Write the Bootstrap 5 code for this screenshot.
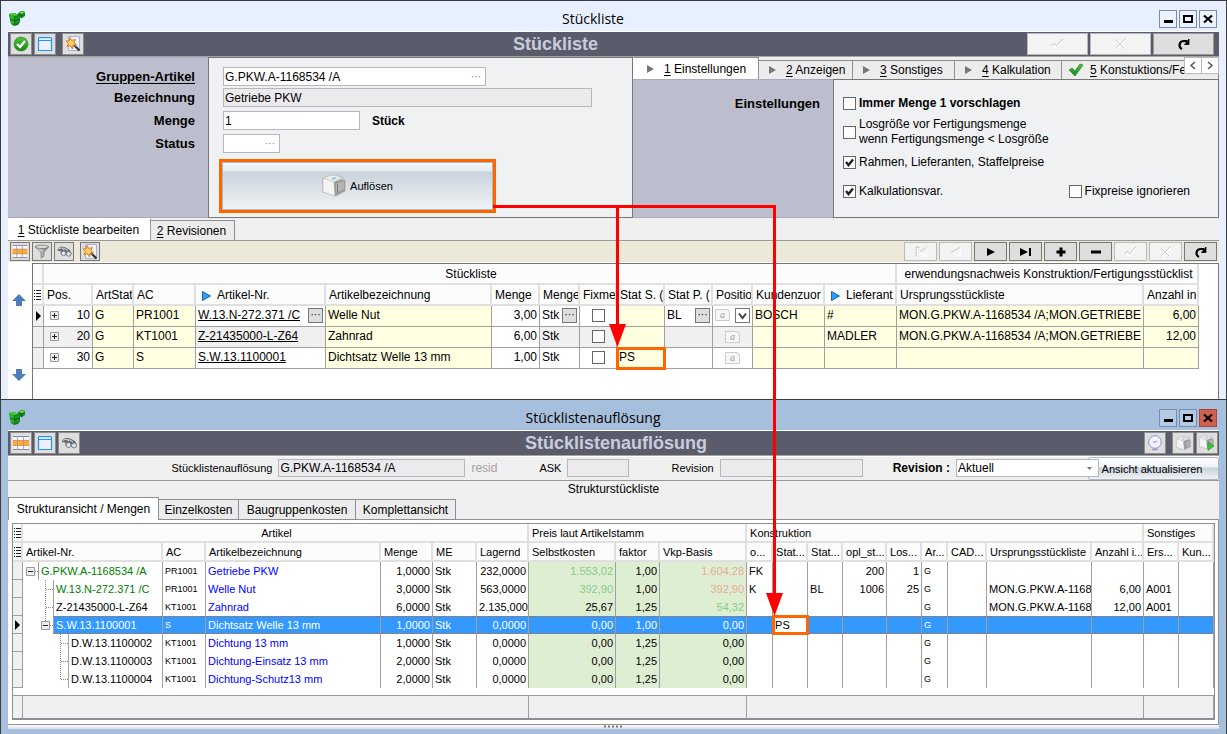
<!DOCTYPE html>
<html lang="de">
<head>
<meta charset="utf-8">
<meta name="viewport" content="width=device-width, initial-scale=1">
<title>Stückliste</title>
<link href="https://cdn.jsdelivr.net/npm/bootstrap@5.3.0/dist/css/bootstrap.min.css" rel="stylesheet">
<style>
:root{--ui:"Liberation Sans",Arial,sans-serif;--line:#8c8f94;--bar:#5a5c6c;--lilac:#bdbecd;--pane:#eff1f3;--mark:#ff6600}
body{font:12px/16px var(--ui);color:#000;background:#a6bfdc;min-height:100vh}
button,input,select{font:inherit;color:inherit}
svg{display:block;flex:none}
a{color:#000}
u{text-underline-offset:2px}
.win{border:1px solid #3c3c40;border-bottom:0;padding:0 7px}
.win-list{background:#e8efff}
.win-tree{background:#a6bfdc;flex:1}
.win-title{height:30px;padding:0 2px 0 1px}
.win-title>svg{margin-top:9px}
.win-title h1{font:14px/20px "Open Sans","Noto Sans",sans-serif;padding:8px 0 0 2px;margin:0}
.win-btns{gap:2px;padding-top:9px}
.win-btn{width:18px;height:18px;border:1px solid #7d8bab;background:#edf2ff;padding:0}
.win-tree .win-btn{background:#b3cae5}
.win-tree .win-btn.closer{background:#d0604f;border-color:#a8483a}
.bar-dark{background:var(--bar);border-top:1px solid #fff;border-bottom:1px solid #a5a59e;height:26px;padding:0 5px 0 2px;gap:2px}
.win-tree .bar-dark{padding-right:1px}
.bar-dark h2{font:bold 18px/22px var(--ui);color:#c9ccda;margin:0}
.apart{margin-left:4px}
.tool{width:22px;height:22px;background:#dedede;border:1px solid #8d8d8d;padding:0}
.tool-sm{width:20px;height:19px;background:#dedede;border:1px solid #777;padding:0}
.tool-wide{width:61px;height:22px;background:#dedede;border:1px solid #999;padding:0}
.tool-nav{width:33px;height:19px;background:#dedede;border:1px solid #777;padding:0}
.tool-wide:disabled,.tool-nav:disabled{background:#f3f3f3;border-color:#b9bac0}
.labels{background:var(--lilac);font:bold 13px/19px var(--ui);text-align:right;width:200px;flex:none;padding:9px 13px 0 0;border-top:1px solid #a9aabb;border-bottom:1px solid #a9aabb}
.fields{background:var(--pane);border:1px solid #777;padding:9px 0 0 14px;flex:1 1 425px;height:161px}
.row-gap-s{margin-bottom:2px}.row-gap-m{margin-bottom:4px}
.inp{height:19px;border:1px solid #b4b7bd;background:#fff;padding:0 1px;border-radius:0;min-width:0;line-height:17px}
.inp.locked{background:#ebebed}
.inp-dots{background:#fff;height:19px;border:1px solid #b4b7bd}
.inp-dots input{border:0;height:17px;padding:0 1px;flex:1;min-width:0;background:none}
.inp-dots button{border:0;background:none;padding:0;width:18px;line-height:10px;color:#777;font-size:10px}
.w-art{width:263px}.w-bez{width:369px}.w-menge{width:137px}.w-status{width:57px}
.resolve{width:271px;height:48px;margin:9px 0 0 -1px;border:1px solid #a9b9c8;outline:3px solid var(--mark);background:linear-gradient(#f6f9fc 0,#e2e9f0 8px,#c9d3dc 9px,#f0f2f4 100%);font-size:11px}
.side{flex:1 1 586px;min-width:0}
.tabs-top{height:22px;background:#f0f0f0;overflow:hidden}
.tab-b{border:1px solid var(--line);border-bottom:0;background:#ececec;padding:0;white-space:nowrap;text-align:center;margin-right:-1px;flex:none}
.tab-b.on{background:#fff;z-index:1}
.tabs-top .tab-b{height:19px;align-self:flex-end;padding:0 0 0 10px;display:flex;align-items:center;gap:10px}
.tabs-top .tab-b.on{height:22px;padding:0 0 0 13px;border-left-color:#fff;width:126px}
.w-t2{width:95px}.w-t3{width:103px}.w-t4{width:108px}
.tabs-top .tab-b.w-t5{width:158px;padding-left:6px;gap:6px}
.scroller{top:0;right:0;z-index:2}
.scroller button{width:18px;height:17px;border:1px solid #b8b8b8;background:#fff;padding:0;margin-left:-1px}
.side .labels{padding-top:14px}
.checks{background:var(--pane);border:1px solid #777;flex:1 1 386px;height:139px;padding:16px 28px 0 9px}
.checks label{display:flex;align-items:center;gap:3px;line-height:15px;white-space:nowrap}
.checks>*{margin-bottom:8px}
.checks>:first-child{margin-bottom:6px}
.checks>:nth-child(3){margin-bottom:14px}
.cb{appearance:none;width:13px;height:13px;border:1px solid #666;background:#fff;margin:0;flex:none}
.cb:checked{background:#fff url("data:image/svg+xml,%3Csvg xmlns='http://www.w3.org/2000/svg' viewBox='0 0 11 11'%3E%3Cpath d='M2 5l2.5 3L9 2.5' fill='none' stroke='%23222' stroke-width='2.4'/%3E%3C/svg%3E")}
.tabs-mid{height:23px;background:#f0f0f0;border-bottom:1px solid #999}
.tabs-mid .tab-b{height:20px;align-self:flex-end;width:85px;padding-right:2px}
.tabs-mid .tab-b.on{height:22px;width:143px;padding-right:2px;border-color:#fff #999 #fff #fff}
.bar-sand{background:#ece9d8;height:22px;padding:1px 2px 0 2px;border-bottom:1px solid #fff}
.gap-2px{gap:2px}
.mover{width:24px;flex:none;background:#fff;padding:31px 0 0 3px;gap:63px}
.mover button{border:0;background:none;padding:0;display:block}
.grid-a{border:1px solid #777;border-bottom:0;background:#fff;padding:0 19px 30px 0;flex:1;min-width:0}
.sheet{table-layout:fixed;width:100%;border-collapse:separate;border-spacing:0}
.sheet th,.sheet td{padding:0 2px;overflow:hidden;white-space:nowrap;font-weight:400;text-align:left;vertical-align:middle}
.sheet th{background:#fcfcfc;border-right:2px solid #e0e0e0;border-bottom:2px solid #e0e0e0;padding:2px 0 0 3px}
.sheet .num{text-align:right}
.sheet .ctr{text-align:center}
.sheet td.hit{outline:3px solid var(--mark);outline-offset:-2px}
.bom th,.bom td{height:21px;line-height:17px}
.bom td{border-right:1px solid #a0a0a0;border-bottom:1px solid #a0a0a0;line-height:18px;padding-bottom:2px}
.bom .y{background:#ffffe1}
.bom .alt td:not(.y):not(.w){background:#f0f0f0}
.bom .flagged{display:flex;align-items:center;gap:6px;padding-left:3px}
.bom td.ind,.tree td.ind{background:#f0f0f0;padding:0}
.sheet th.ind{padding:0}
.bom col:nth-child(1){width:11px}.bom col:nth-child(2){width:49px}.bom col:nth-child(3){width:41px}.bom col:nth-child(4){width:62px}
.bom col:nth-child(5){width:130px}.bom col:nth-child(6){width:166px}.bom col:nth-child(7),.bom col:nth-child(10),.bom col:nth-child(11){width:48px}
.bom col:nth-child(8),.bom col:nth-child(12){width:40px}.bom col:nth-child(9){width:37px}
.bom col:nth-child(13),.bom col:nth-child(14){width:72px}.bom col:nth-child(16){width:55px}
.dots{width:15px;height:15px;border:1px solid #777;background:#dedede;padding:0;line-height:8px;font-size:10px;flex:none}
.cell{display:flex;align-items:center;justify-content:space-between}
.note{width:15px;height:12px;border:1px solid #ccc;background:#f7f7f7;color:#999;font:italic 10px/9px "Liberation Serif",serif;text-align:center;border-top-right-radius:4px;display:inline-block;flex:none}
.bar-form{background:#f0f0f0;height:25px;border-bottom:1px solid #999;border-top:1px solid #fff;font-size:11px;padding-top:2px}
.bar-form .inp{height:18px;font-size:12px;line-height:16px}
.near{margin-right:6px}.far{margin-right:42px}.mid{margin-right:30px}
.w-obj{width:187px}.w-ask{width:62px}.w-rev{width:143px}
.muted{color:#a0a0a0;font-size:12px}
.revlabel{font-weight:700;font-size:12px}
.revsel{appearance:none;position:relative;width:143px;background:#fff url("data:image/svg+xml,%3Csvg xmlns='http://www.w3.org/2000/svg' width='5' height='3'%3E%3Cpath d='M0 0h5L2.5 3z' fill='%23777'/%3E%3C/svg%3E") no-repeat right 6px center}
.refresh{width:131px;height:23px;margin:-2px 0 0 -11px;border:1px solid #a9b9c8;border-radius:2px;background:linear-gradient(#fff 0,#eef2f6 9px,#c9d3dc 10px,#f0f2f4 100%);padding:0 3px 0 0;white-space:nowrap}
.sub{background:#f0f0f0;line-height:16px;height:16px;text-align:center}
.tabs-low{background:#f0f0f0;height:23px;border-bottom:1px solid var(--line)}
.tabs-low .tab-b{height:20px;align-self:flex-end}
.tabs-low .tab-b.on{height:23px;margin-bottom:-1px;line-height:18px;width:151px}
.w-l2{width:81px}.w-l3{width:118px}.w-l4{width:101px}
.low-body{background:#fff;padding:3px 3px 4px 4px;border-bottom:1px solid var(--line);border-right:1px solid var(--line)}
.grid-b{border:1px solid var(--line);border-bottom-width:2px}
.tree{font-size:11px}
.tree th{height:19px;line-height:15px}
.tree td{height:18px;line-height:18px;border-right:1px solid #a0a0a0}
.tree td.ind{border-bottom:1px solid #a0a0a0}
.tree .tiny{font-size:9px}
.tree .name{color:#00f}
.tree td.gr{background:#deeed2}
.tree .pos{color:#8c8}.tree .neg{color:#eba99c}
.tree .limb{padding:0}
.tree .limb>div{display:flex;height:18px}
.tree .limb span{border-left:1px solid #a0a0a0;padding-left:2px;flex:1;overflow:hidden}
.tree .sel td:not(.ind):not(.hit):not(.limb),.tree .sel .limb span{background:#3399ff;color:#fff;border-top:1px dotted #c96a1c;border-bottom:1px dotted #c96a1c;line-height:16px}
.tree .art{color:#008000}
.tree td.gap-row{height:7px;line-height:0;border:0}
.tree tfoot td{height:23px;background:#f0f0f0;border-top:1px solid #999}
.tree col:nth-child(1){width:10px}.tree col:nth-child(2){width:140px}.tree col:nth-child(3){width:43px}.tree col:nth-child(4){width:175px}
.tree col:nth-child(5),.tree col:nth-child(7),.tree col:nth-child(19){width:52px}
.tree col:nth-child(6),.tree col:nth-child(9),.tree col:nth-child(14){width:44px}
.tree col:nth-child(8),.tree col:nth-child(10){width:87px}
.tree col:nth-child(11),.tree col:nth-child(16){width:26px}
.tree col:nth-child(12),.tree col:nth-child(13),.tree col:nth-child(15),.tree col:nth-child(20),.tree col:nth-child(21){width:35px}
.tree col:nth-child(17){width:39px}
.grip{height:4px;background:linear-gradient(#fff,#d5dae2)}
.flow{top:0;left:0;pointer-events:none;z-index:5}
</style>
</head>
<body class="position-relative d-flex flex-column">

<svg width="0" height="0" class="position-absolute" aria-hidden="true">
 <defs>
  <linearGradient id="gGreen" x1="0" y1="0" x2="0" y2="1"><stop offset="0" stop-color="#4fc33c"/><stop offset="1" stop-color="#14861a"/></linearGradient>
  <linearGradient id="gMetal" x1="0" y1="0" x2="1" y2="0"><stop offset="0" stop-color="#fafafa"/><stop offset="1" stop-color="#777"/></linearGradient>
 </defs>
 <symbol id="i-logo" viewBox="0 0 16 16"><path d="M0 4l5-1 6 2v7l-2 3-4 1-3-2z" fill="#0f7a18"/><path d="M0 4l5-1 5 2-5 1z" fill="#4fd23c"/><path d="M0 4l5 2v9l-3-2z" fill="#2fb52b"/><path d="M6 7l4-1v6l-4 2z" fill="#1a9a22"/><path d="M9 3l3-2h3l1 2v3l-3 2-3-1z" fill="#14861a"/><path d="M9.500 3l3-1.500h2.500l.5 1-3 1.500z" fill="#66e04e"/><path d="M1 9l5 2 4-2M9.500 4l3 1v3" fill="none" stroke="#0a5510" stroke-width=".9"/></symbol>
 <symbol id="i-ok" viewBox="0 0 16 16"><circle cx="8" cy="8" r="7" fill="url(#gGreen)" stroke="#157a18" stroke-width=".6"/><path d="M4 8l3 3 5-6" fill="none" stroke="#fff" stroke-width="2.300"/></symbol>
 <symbol id="i-win" viewBox="0 0 16 16"><path d="M1.500 2.500q0-1 1-1h11q1 0 1 1v12h-13z" fill="#eef0ff" stroke="#1e96f5" stroke-width="1.200"/><path d="M1.500 4.500h13" stroke="#1e96f5"/><path d="M2 2.500h12" stroke="#bfe1ff"/></symbol>
 <symbol id="i-wand" viewBox="0 0 16 16"><path d="M3.500.5h11v14h-11z" fill="#edf0fa" stroke="#a5b1d6"/><path d="M5 1.500l1.700 3 3.500-1-1.200 3.300 2.500 2.200-3.500.5L7.500 13 5.500 9.500 2 10.500l1.500-3L1 5l3.300-.3z" fill="#ffd068" stroke="#e07a10"/><path d="M9 9l5.500 5.500" stroke="#333" stroke-width="2.200"/><path d="M9 8.500l2 2" stroke="#ccc"/></symbol>
 <symbol id="i-grid" viewBox="0 0 16 16"><path d="M0 1h16v14H0z" fill="#f3f3ff"/><path d="M0 5.500h16v5H0z" fill="#ffa837"/><path d="M0 1.500h16M0 14.500h16" stroke="#889"/><path d="M4.500 1v14M10.500 1v14" stroke="#9a9ab5" stroke-width=".8"/><path d="M0 5.500h16M0 10.500h16" stroke="#c77c1f" stroke-width=".6"/></symbol>
 <symbol id="i-funnel" viewBox="0 0 16 16"><path d="M1 3l6 6v6l3-2V9l5-6z" fill="url(#gMetal)" stroke="#666" stroke-width=".7"/><ellipse cx="8" cy="3" rx="7" ry="1.800" fill="#ddd" stroke="#666" stroke-width=".8"/></symbol>
 <symbol id="i-bino" viewBox="0 0 16 16"><path d="M1 5.500l3-2.500h4l6 3 2 4-2 3-3-1-1-3-3 2-3-1 1-2-4-1z" fill="#6a6a6a"/><path d="M2 5.500l3-1.500 3 2M7 4l5 3" stroke="#e4e4e4" fill="none"/><circle cx="7.500" cy="10" r="2.500" fill="#d5e6f6" stroke="#666" stroke-width=".8"/><circle cx="13" cy="10.500" r="2.500" fill="#d5e6f6" stroke="#666" stroke-width=".8"/></symbol>
 <symbol id="i-box" viewBox="0 0 24 24"><path d="M1 4l9-3 10 2 3 3v11l-9 5L1 18z" fill="#ddd" stroke="#aaa" stroke-width=".8"/><path d="M1 4l11 4 1 14L1 18z" fill="#f4f4f4" stroke="#bbb" stroke-width=".6"/><path d="M12 8l8-3 3 2v10l-10 5z" fill="#9b9b9b"/><path d="M14 10l8-3v8l-8 4z" fill="#b4b4b4"/><path d="M15.500 10v9" stroke="#777"/><path d="M1 4l9-3 10 2-8 5z" fill="#ededed" stroke="#bbb" stroke-width=".5"/><path d="M12 3l3 1-4 2-2-1z" fill="#7fc8ee"/></symbol>
 <symbol id="i-boxgo" viewBox="0 0 16 16"><use href="#i-box" width="15" height="15"/><path d="M9 7l6 4-6 4.500z" fill="#3fc53a" stroke="#1d8a1d" stroke-width=".6"/></symbol>
 <symbol id="i-disc" viewBox="0 0 16 16"><circle cx="8" cy="7" r="6.300" fill="#f2f2ff" stroke="#9090c8"/><path d="M8 7.500l2-2M8 7.500l-2-1" stroke="#8080b8"/><path d="M5 14.500h6" stroke="#9a9ac8" stroke-width="1.500"/></symbol>
 <symbol id="i-tick" viewBox="0 0 16 16"><path d="M2 10l2-1 2 2 8-8 1 1-9 9H5z" fill="#fff"/><path d="M1 9l3-1.500 2 2.500 8-8" fill="none" stroke="#a8a8a8" stroke-dasharray="2 1"/></symbol>
 <symbol id="i-cross" viewBox="0 0 16 16"><path d="M3.500 3.500l10 10M13.500 3.500l-10 10" stroke="#fff" stroke-width="2"/><path d="M2 3l11 11M13 2L2 13" fill="none" stroke="#a8a8a8" stroke-dasharray="2 1"/></symbol>
 <symbol id="i-redo" viewBox="0 0 16 16"><path d="M6 13C2 11 3 5 8 5h3" fill="none" stroke="#000" stroke-width="2.200"/><path d="M8.500 8.500H13V3z" stroke="#000" stroke-width=".8"/></symbol>
 <symbol id="i-next" viewBox="0 0 16 16"><path d="M4 4l8 4-8 4z"/></symbol>
 <symbol id="i-last" viewBox="0 0 16 16"><path d="M2 4l8 4-8 4zM11 4h2v8h-2z"/></symbol>
 <symbol id="i-prev" viewBox="0 0 16 16"><path d="M12.500 3v10L4 8.500" fill="none" stroke="#fff" stroke-width="1.500"/><path d="M12 3L3 8h1" fill="none" stroke="#a8a8a8" stroke-dasharray="2 1"/></symbol>
 <symbol id="i-first" viewBox="0 0 16 16"><path d="M14.500 3v10L6 8.500M3.500 3v10" fill="none" stroke="#fff" stroke-width="1.500"/><path d="M14 3L6 8M2.500 13V2.500H6" fill="none" stroke="#a8a8a8" stroke-dasharray="2 1"/></symbol>
 <symbol id="i-plus" viewBox="0 0 16 16"><path d="M6.500 3.500h3v3h3v3h-3v3h-3v-3h-3v-3h3z"/></symbol>
 <symbol id="i-minus" viewBox="0 0 16 16"><path d="M3 6.500h10v3H3z"/></symbol>
 <symbol id="i-min" viewBox="0 0 16 16"><path d="M4 9h9v3H4z"/></symbol>
 <symbol id="i-max" viewBox="0 0 16 16"><path d="M4 5h8v6H4z" fill="none" stroke="#000" stroke-width="2"/></symbol>
 <symbol id="i-x" viewBox="0 0 16 16"><path d="M4 4.500l8 7M12 4.500l-8 7" stroke="#000" stroke-width="2.300"/></symbol>
 <symbol id="i-up" viewBox="0 0 16 12"><path d="M8 0l7 7h-4v5H5V7H1z" fill="#4a7fbb"/></symbol>
 <symbol id="i-down" viewBox="0 0 16 12"><path d="M8 12l7-7h-4V0H5v5H1z" fill="#4a7fbb"/></symbol>
 <symbol id="i-rows" viewBox="0 0 7 10"><path d="M2 .5h5M2 3.500h5M2 6.500h5M2 9.500h5" stroke="#222"/><path d="M0 0h1v1H0zM0 3h1v1H0zM0 6h1v1H0zM0 9h1v1H0z"/></symbol>
 <symbol id="i-expand" viewBox="0 0 9 9"><path d="M.5.5h8v8h-8z" fill="#eee" stroke="#999"/><path d="M2 4.500h5M4.500 2v5" stroke="#222"/></symbol>
 <symbol id="i-flag" viewBox="0 0 9 10"><path d="M.5.500l8 4.500-8 4.500z" fill="#2f9bf0" stroke="#1667b8"/></symbol>
 <symbol id="i-cur" viewBox="0 0 5 10"><path d="M0 0l5 5-5 5z"/></symbol>
 <symbol id="i-tabarrow" viewBox="0 0 7 8"><path d="M0 0l7 4-7 4z" fill="#777"/></symbol>
 <symbol id="i-done" viewBox="0 0 16 14"><path d="M1 7l3-2 3 3 5-7 3 1-8 11z" fill="url(#gGreen)" stroke="#157a18" stroke-width=".6"/></symbol>
 <symbol id="t-open" viewBox="0 0 15 18"><path d="M3.500 5.500h8v8h-8z" fill="#eee" stroke="#999"/><path d="M5 9.500h5" stroke="#222"/><path d="M12 9.500h3" stroke="#888" stroke-dasharray="1 1"/></symbol>
 <symbol id="t-last" viewBox="0 0 15 18"><path d="M7.500 0v5" stroke="#888" stroke-dasharray="1 1"/><use href="#t-open" width="15" height="18"/></symbol>
 <symbol id="t-mid" viewBox="0 0 15 18"><path d="M7.500 0v18M8 9.500h7" fill="none" stroke="#888" stroke-dasharray="1 1"/></symbol>
 <symbol id="t-end" viewBox="0 0 15 18"><path d="M7.500 0v10M8 9.500h7" fill="none" stroke="#888" stroke-dasharray="1 1"/></symbol>
</svg>

<section class="win win-list">
 <header class="win-title d-flex">
  <svg width="16" height="16"><use href="#i-logo"/></svg>
  <h1 class="flex-grow-1 text-center">Stückliste</h1>
  <div class="win-btns d-flex">
   <button class="win-btn" aria-label="Minimieren"><svg width="16" height="16"><use href="#i-min"/></svg></button>
   <button class="win-btn" aria-label="Maximieren"><svg width="16" height="16"><use href="#i-max"/></svg></button>
   <button class="win-btn" aria-label="Schließen"><svg width="16" height="16"><use href="#i-x"/></svg></button>
  </div>
 </header>
 <div class="bar-dark d-flex align-items-center">
  <button class="tool" aria-label="Übernehmen"><svg width="16" height="16" class="mx-auto"><use href="#i-ok"/></svg></button>
  <button class="tool" aria-label="Fenster"><svg width="16" height="16" class="mx-auto"><use href="#i-win"/></svg></button>
  <button class="tool apart" aria-label="Assistent"><svg width="16" height="16" class="mx-auto"><use href="#i-wand"/></svg></button>
  <h2 class="flex-grow-1 text-center">Stückliste</h2>
  <button class="tool-wide" disabled aria-label="Speichern"><svg width="14" height="14" class="mx-auto"><use href="#i-tick"/></svg></button>
  <button class="tool-wide" disabled aria-label="Verwerfen"><svg width="14" height="14" class="mx-auto"><use href="#i-cross"/></svg></button>
  <button class="tool-wide" aria-label="Neu laden"><svg width="16" height="16" class="mx-auto"><use href="#i-redo"/></svg></button>
 </div>

 <div class="d-flex">
  <div class="labels d-flex flex-column">
   <label for="art" class="row-gap-s"><u>Gruppen-Artikel</u></label>
   <label for="bez" class="row-gap-m">Bezeichnung</label>
   <label for="menge" class="row-gap-m">Menge</label>
   <label for="status">Status</label>
  </div>
  <div class="fields">
   <div class="inp-dots w-art d-flex row-gap-s"><input id="art" value="G.PKW.A-1168534 /A"><button aria-label="Artikel suchen">···</button></div>
   <div class="d-flex row-gap-m"><input id="bez" class="inp locked w-bez" value="Getriebe PKW" readonly></div>
   <div class="d-flex align-items-center row-gap-m"><input id="menge" class="inp w-menge" value="1"><b class="ms-2 ps-1">Stück</b></div>
   <div class="inp-dots w-status d-flex"><input id="status"><button aria-label="Status suchen">···</button></div>
   <button class="resolve d-flex align-items-center justify-content-center gap-1"><svg width="24" height="24"><use href="#i-box"/></svg>Auflösen</button>
  </div>
  <div class="side d-flex flex-column">
   <div class="tabs-top d-flex position-relative">
    <button class="tab-b on"><svg width="7" height="8"><use href="#i-tabarrow"/></svg><span><u>1</u> Einstellungen</span></button>
    <button class="tab-b w-t2"><svg width="7" height="8"><use href="#i-tabarrow"/></svg><span><u>2</u> Anzeigen</span></button>
    <button class="tab-b w-t3"><svg width="7" height="8"><use href="#i-tabarrow"/></svg><span><u>3</u> Sonstiges</span></button>
    <button class="tab-b w-t4"><svg width="7" height="8"><use href="#i-tabarrow"/></svg><span><u>4</u> Kalkulation</span></button>
    <button class="tab-b w-t5"><svg width="16" height="14"><use href="#i-done"/></svg><span><u>5</u> Konstuktions/Fe</span></button>
    <div class="scroller position-absolute d-flex">
     <button aria-label="Zurück"><svg width="16" height="15" viewBox="0 0 16 15"><path d="M10 4L6 7.500l4 3.500" fill="none" stroke="#555" stroke-width="1.500"/></svg></button>
     <button aria-label="Weiter"><svg width="16" height="15" viewBox="0 0 16 15"><path d="M6 4l4 3.500L6 11" fill="none" stroke="#555" stroke-width="1.500"/></svg></button>
    </div>
   </div>
   <div class="d-flex flex-grow-1">
    <div class="labels">Einstellungen</div>
    <div class="checks">
     <label class="fw-bold"><input type="checkbox" class="cb"><span>Immer Menge 1 vorschlagen</span></label>
     <label><input type="checkbox" class="cb"><span>Losgröße vor Fertigungsmenge<br>wenn Fertigungsmenge &lt; Losgröße</span></label>
     <label><input type="checkbox" class="cb" checked><span>Rahmen, Lieferanten, Staffelpreise</span></label>
     <div class="d-flex justify-content-between">
      <label><input type="checkbox" class="cb" checked><span>Kalkulationsvar.</span></label>
      <label><input type="checkbox" class="cb"><span>Fixpreise ignorieren</span></label>
     </div>
    </div>
   </div>
  </div>
 </div>

 <div class="tabs-mid d-flex">
  <button class="tab-b on"><u>1</u> Stückliste bearbeiten</button>
  <button class="tab-b"><u>2</u> Revisionen</button>
 </div>
 <div class="bar-sand d-flex justify-content-between">
  <div class="d-flex gap-2px">
   <button class="tool-sm" aria-label="Raster"><svg width="16" height="15" class="mx-auto"><use href="#i-grid"/></svg></button>
   <button class="tool-sm" aria-label="Filter"><svg width="16" height="15" class="mx-auto"><use href="#i-funnel"/></svg></button>
   <button class="tool-sm" aria-label="Suchen"><svg width="16" height="15" class="mx-auto"><use href="#i-bino"/></svg></button>
   <button class="tool-sm apart" aria-label="Assistent"><svg width="16" height="16" class="mx-auto"><use href="#i-wand"/></svg></button>
  </div>
  <div class="d-flex gap-2px">
   <button class="tool-nav" disabled aria-label="Erster"><svg width="14" height="14" class="mx-auto"><use href="#i-first"/></svg></button>
   <button class="tool-nav" disabled aria-label="Voriger"><svg width="14" height="14" class="mx-auto"><use href="#i-prev"/></svg></button>
   <button class="tool-nav" aria-label="Nächster"><svg width="16" height="16" class="mx-auto"><use href="#i-next"/></svg></button>
   <button class="tool-nav" aria-label="Letzter"><svg width="16" height="16" class="mx-auto"><use href="#i-last"/></svg></button>
   <button class="tool-nav" aria-label="Einfügen"><svg width="16" height="16" class="mx-auto"><use href="#i-plus"/></svg></button>
   <button class="tool-nav" aria-label="Löschen"><svg width="16" height="16" class="mx-auto"><use href="#i-minus"/></svg></button>
   <button class="tool-nav" disabled aria-label="Speichern"><svg width="14" height="14" class="mx-auto"><use href="#i-tick"/></svg></button>
   <button class="tool-nav" disabled aria-label="Verwerfen"><svg width="14" height="14" class="mx-auto"><use href="#i-cross"/></svg></button>
   <button class="tool-nav" aria-label="Neu laden"><svg width="16" height="16" class="mx-auto"><use href="#i-redo"/></svg></button>
  </div>
 </div>

 <div class="d-flex">
  <div class="mover d-flex flex-column">
   <button aria-label="Nach oben"><svg width="16" height="12"><use href="#i-up"/></svg></button>
   <button aria-label="Nach unten"><svg width="16" height="12"><use href="#i-down"/></svg></button>
  </div>
  <div class="grid-a">
   <table class="sheet bom">
    <colgroup><col><col><col><col><col><col><col><col><col><col><col><col><col><col><col><col></colgroup>
    <thead>
     <tr><th class="ind"></th><th colspan="13" class="ctr">Stückliste</th><th colspan="2" class="ctr">erwendungsnachweis Konstruktion/Fertigungsstücklist</th></tr>
     <tr><th class="ind"><svg width="7" height="10" class="mx-auto"><use href="#i-rows"/></svg></th><th>Pos.</th><th>ArtStat</th><th>AC</th><th><span class="flagged"><svg width="9" height="10"><use href="#i-flag"/></svg>Artikel-Nr.</span></th><th>Artikelbezeichnung</th><th>Menge</th><th>Menge</th><th>Fixme</th><th>Stat S. (</th><th>Stat P. (</th><th>Positio</th><th>Kundenzuor</th><th><span class="flagged"><svg width="9" height="10"><use href="#i-flag"/></svg>Lieferant</span></th><th>Ursprungsstückliste</th><th>Anzahl in</th></tr>
    </thead>
    <tbody>
     <tr><td class="ind"><svg width="5" height="10" class="mx-auto"><use href="#i-cur"/></svg></td><td><span class="cell"><svg width="9" height="9" class="ms-1"><use href="#i-expand"/></svg>10</span></td><td class="y">G</td><td class="y">PR1001</td><td><span class="cell"><a href="#">W.13.N-272.371 /C</a><button class="dots" aria-label="Artikel wählen">···</button></span></td><td class="y">Welle Nut</td><td class="num">3,00</td><td><span class="cell">Stk<button class="dots" aria-label="Einheit wählen">···</button></span></td><td><input type="checkbox" class="cb d-block mx-auto" aria-label="Fixmenge"></td><td class="y"></td><td><span class="cell">BL<button class="dots" aria-label="Status wählen">···</button></span></td><td><span class="cell"><i class="note">a</i><button class="dots bg-white" aria-label="Position"><svg width="13" height="13" viewBox="0 0 13 13"><path d="M3 4.500L6.500 9 10 4.500" fill="none" stroke="#444" stroke-width="2"/></svg></button></span></td><td class="y">BOSCH</td><td class="y">#</td><td class="y">MON.G.PKW.A-1168534 /A;MON.GETRIEBE</td><td class="y num">6,00</td></tr>
     <tr class="alt"><td class="ind"></td><td><span class="cell"><svg width="9" height="9" class="ms-1"><use href="#i-expand"/></svg>20</span></td><td class="y">G</td><td class="y">KT1001</td><td><a href="#">Z-21435000-L-Z64</a></td><td class="y">Zahnrad</td><td class="num w">6,00</td><td>Stk</td><td><input type="checkbox" class="cb d-block mx-auto" aria-label="Fixmenge"></td><td class="y"></td><td></td><td class="ctr"><i class="note">a</i></td><td class="y"></td><td class="y">MADLER</td><td class="y">MON.G.PKW.A-1168534 /A;MON.GETRIEBE</td><td class="y num">12,00</td></tr>
     <tr><td class="ind"></td><td><span class="cell"><svg width="9" height="9" class="ms-1"><use href="#i-expand"/></svg>30</span></td><td class="y">G</td><td class="y">S</td><td><a href="#">S.W.13.1100001</a></td><td class="y">Dichtsatz Welle 13 mm</td><td class="num">1,00</td><td>Stk</td><td><input type="checkbox" class="cb d-block mx-auto" aria-label="Fixmenge"></td><td class="y hit">PS</td><td></td><td class="ctr"><i class="note">a</i></td><td class="y"></td><td class="y"></td><td class="y"></td><td class="y"></td></tr>
    </tbody>
   </table>
  </div>
 </div>
</section>

<section class="win win-tree">
 <header class="win-title d-flex">
  <svg width="16" height="16"><use href="#i-logo"/></svg>
  <h1 class="flex-grow-1 text-center">Stücklistenauflösung</h1>
  <div class="win-btns d-flex">
   <button class="win-btn" aria-label="Minimieren"><svg width="16" height="16"><use href="#i-min"/></svg></button>
   <button class="win-btn" aria-label="Maximieren"><svg width="16" height="16"><use href="#i-max"/></svg></button>
   <button class="win-btn closer" aria-label="Schließen"><svg width="16" height="16"><use href="#i-x"/></svg></button>
  </div>
 </header>
 <div class="bar-dark d-flex align-items-center">
  <button class="tool" aria-label="Raster"><svg width="16" height="16" class="mx-auto"><use href="#i-grid"/></svg></button>
  <button class="tool" aria-label="Fenster"><svg width="16" height="16" class="mx-auto"><use href="#i-win"/></svg></button>
  <button class="tool" aria-label="Suchen"><svg width="16" height="16" class="mx-auto"><use href="#i-bino"/></svg></button>
  <h2 class="flex-grow-1 text-center ps-2">Stücklistenauflösung</h2>
  <button class="tool" aria-label="Verlauf"><svg width="16" height="16" class="mx-auto"><use href="#i-disc"/></svg></button>
  <button class="tool apart" aria-label="Auflösen"><svg width="15" height="15" class="mx-auto"><use href="#i-box"/></svg></button>
  <button class="tool" aria-label="Auflösen starten"><svg width="16" height="16" class="mx-auto"><use href="#i-boxgo"/></svg></button>
 </div>
 <div class="bar-form d-flex align-items-start">
  <div class="d-flex align-items-center flex-grow-1 justify-content-end">
   <label for="obj" class="near">Stücklistenauflösung</label><input id="obj" class="inp locked w-obj near" value="G.PKW.A-1168534 /A" readonly>
   <span class="muted far">resid</span>
   <label for="ask" class="near">ASK</label><input id="ask" class="inp locked w-ask far" readonly>
   <label for="rev" class="near">Revision</label><input id="rev" class="inp locked w-rev mid" readonly>
   <label for="revsel" class="near revlabel">Revision :</label>
   <select id="revsel" class="inp revsel"><option>Aktuell</option></select>
  </div>
  <button class="refresh">Ansicht aktualisieren</button>
 </div>
 <div class="sub">Strukturstückliste</div>
 <div class="tabs-low d-flex">
  <button class="tab-b on">Strukturansicht / Mengen</button>
  <button class="tab-b w-l2">Einzelkosten</button>
  <button class="tab-b w-l3">Baugruppenkosten</button>
  <button class="tab-b w-l4">Komplettansicht</button>
 </div>
 <div class="low-body">
  <div class="grid-b">
   <table class="sheet tree">
    <colgroup><col><col><col><col><col><col><col><col><col><col><col><col><col><col><col><col><col><col><col><col><col></colgroup>
    <thead>
     <tr><th class="ind"><svg width="7" height="10" class="mx-auto"><use href="#i-rows"/></svg></th><th colspan="6" class="ctr">Artikel</th><th colspan="3">Preis laut Artikelstamm</th><th colspan="9">Konstruktion</th><th colspan="2">Sonstiges</th></tr>
     <tr><th class="ind"><svg width="7" height="10" class="mx-auto"><use href="#i-rows"/></svg></th><th>Artikel-Nr.</th><th>AC</th><th>Artikelbezeichnung</th><th>Menge</th><th>ME</th><th>Lagernd</th><th>Selbstkosten</th><th>faktor</th><th>Vkp-Basis</th><th>o...</th><th>Stat...</th><th>Stat...</th><th>opl_st...</th><th>Los...</th><th>Ar...</th><th>CAD...</th><th>Ursprungsstückliste</th><th>Anzahl i...</th><th>Ers...</th><th>Kun...</th></tr>
    </thead>
    <tbody>
     <tr><td class="ind"></td><td class="limb"><div><svg width="15" height="18"><use href="#t-open"/></svg><span class="art">G.PKW.A-1168534 /A</span></div></td><td class="tiny">PR1001</td><td class="name">Getriebe PKW</td><td class="num">1,0000</td><td>Stk</td><td class="num">232,0000</td><td class="num gr pos">1.553,02</td><td class="num gr">1,00</td><td class="num gr neg">1.604,28</td><td>FK</td><td></td><td></td><td class="num">200</td><td class="num">1</td><td class="tiny">G</td><td></td><td></td><td></td><td></td><td></td></tr>
     <tr><td class="ind"></td><td class="limb"><div><svg width="15" height="18"></svg><svg width="15" height="18"><use href="#t-mid"/></svg><span class="art">W.13.N-272.371 /C</span></div></td><td class="tiny">PR1001</td><td class="name">Welle Nut</td><td class="num">3,0000</td><td>Stk</td><td class="num">563,0000</td><td class="num gr pos">392,90</td><td class="num gr">1,00</td><td class="num gr neg">392,90</td><td>K</td><td></td><td>BL</td><td class="num">1006</td><td class="num">25</td><td class="tiny">G</td><td></td><td>MON.G.PKW.A-1168</td><td class="num">6,00</td><td>A001</td><td></td></tr>
     <tr><td class="ind"></td><td class="limb"><div><svg width="15" height="18"></svg><svg width="15" height="18"><use href="#t-mid"/></svg><span>Z-21435000-L-Z64</span></div></td><td class="tiny">KT1001</td><td class="name">Zahnrad</td><td class="num">6,0000</td><td>Stk</td><td>2.135,000</td><td class="num gr">25,67</td><td class="num gr">1,25</td><td class="num gr pos">54,32</td><td></td><td></td><td></td><td></td><td></td><td class="tiny">G</td><td></td><td>MON.G.PKW.A-1168</td><td class="num">12,00</td><td>A001</td><td></td></tr>
     <tr class="sel"><td class="ind"><svg width="5" height="10" class="mx-auto"><use href="#i-cur"/></svg></td><td class="limb"><div><svg width="15" height="18"></svg><svg width="15" height="18"><use href="#t-last"/></svg><span>S.W.13.1100001</span></div></td><td class="tiny">S</td><td class="name">Dichtsatz Welle 13 mm</td><td class="num">1,0000</td><td>Stk</td><td class="num">0,0000</td><td class="num">0,00</td><td class="num">1,00</td><td class="num">0,00</td><td></td><td class="hit">PS</td><td></td><td></td><td></td><td class="tiny">G</td><td></td><td></td><td></td><td></td><td></td></tr>
     <tr><td class="ind"></td><td class="limb"><div><svg width="30" height="18"></svg><svg width="15" height="18"><use href="#t-mid"/></svg><span>D.W.13.1100002</span></div></td><td class="tiny">KT1001</td><td class="name">Dichtung 13 mm</td><td class="num">1,0000</td><td>Stk</td><td class="num">0,0000</td><td class="num gr">0,00</td><td class="num gr">1,25</td><td class="num gr">0,00</td><td></td><td></td><td></td><td></td><td></td><td class="tiny">G</td><td></td><td></td><td></td><td></td><td></td></tr>
     <tr><td class="ind"></td><td class="limb"><div><svg width="30" height="18"></svg><svg width="15" height="18"><use href="#t-mid"/></svg><span>D.W.13.1100003</span></div></td><td class="tiny">KT1001</td><td class="name">Dichtung-Einsatz 13 mm</td><td class="num">2,0000</td><td>Stk</td><td class="num">0,0000</td><td class="num gr">0,00</td><td class="num gr">1,25</td><td class="num gr">0,00</td><td></td><td></td><td></td><td></td><td></td><td class="tiny">G</td><td></td><td></td><td></td><td></td><td></td></tr>
     <tr><td class="ind"></td><td class="limb"><div><svg width="30" height="18"></svg><svg width="15" height="18"><use href="#t-end"/></svg><span>D.W.13.1100004</span></div></td><td class="tiny">KT1001</td><td class="name">Dichtung-Schutz13 mm</td><td class="num">2,0000</td><td>Stk</td><td class="num">0,0000</td><td class="num gr">0,00</td><td class="num gr">1,25</td><td class="num gr">0,00</td><td></td><td></td><td></td><td></td><td></td><td class="tiny">G</td><td></td><td></td><td></td><td></td><td></td></tr>
     <tr><td class="gap-row" colspan="21"></td></tr>
    </tbody>
    <tfoot><tr><td></td><td colspan="6"></td><td colspan="3"></td><td colspan="9"></td><td colspan="2"></td></tr></tfoot>
   </table>
  </div>
 </div>
 <div class="grip d-flex justify-content-center"><svg width="19" height="3" viewBox="0 0 19 3"><path d="M0 1.500h19" stroke="#777" stroke-width="2" stroke-dasharray="2 2"/></svg></div>
</section>

<svg class="flow position-absolute" width="790" height="620" viewBox="0 0 790 620" aria-hidden="true">
 <path d="M493 206.500h281.500V595M617.500 206.500V326" fill="none" stroke="#f00" stroke-width="3"/>
 <path d="M609 324h17l-8.500 23zM766 593h17l-8.500 23z" fill="#f00"/>
</svg>
<script src="https://cdn.jsdelivr.net/npm/bootstrap@5.3.0/dist/js/bootstrap.bundle.min.js"></script>
</body>
</html>
